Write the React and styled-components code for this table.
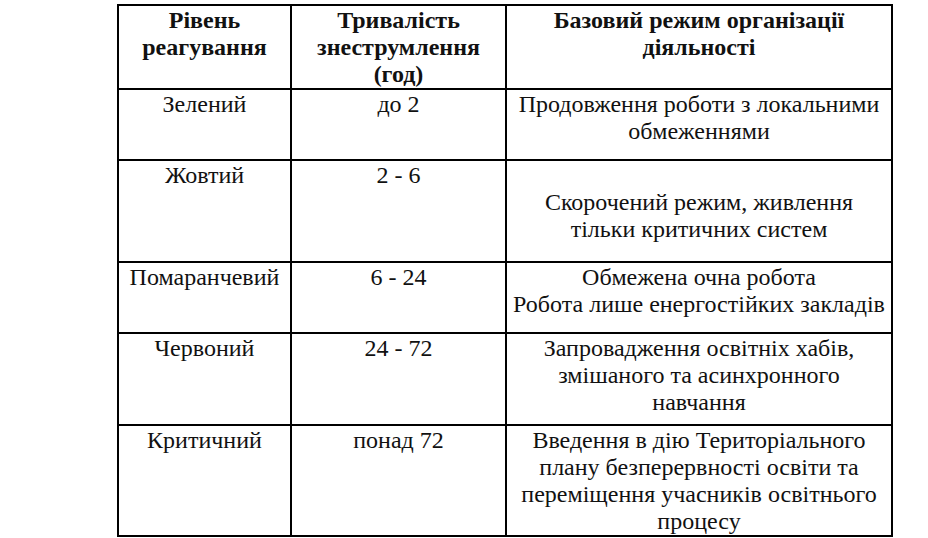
import styled, { createGlobalStyle } from "styled-components"

const GlobalStyle = createGlobalStyle`
  body {
    margin: 0;
  }
`

const serif = '"Liberation Serif", "Times New Roman", serif'

const Page = styled.div`
  padding: 4px 0 0 117px;
`

const Table = styled.table`
  border-collapse: collapse;
  font-family: ${(p) => p.f};
`

const Row = styled.tr`
  height: ${(props) => props.h}px;
`

const Cell = styled.td`
  font-family: ${(p) => p.f};
  font-size: 24px;
  line-height: 27px;
  font-weight: ${(p) => (p.head ? 700 : 400)};
  color: #111;
  width: ${(p) => p.w}px;
  border: 2px solid #000;
  text-align: center;
  vertical-align: top;
  padding: 1px 0 0;
  white-space: nowrap;
`

const widths = [171, 213, 384]

const rows = [
  { h: 71, level: "Зелений", time: "до 2", mode: ["Продовження роботи з локальними", "обмеженнями"] },
  { h: 102, level: "Жовтий", time: "2 - 6", mode: ["\u00a0", "Скорочений режим, живлення", "тільки критичних систем"] },
  { h: 71, level: "Помаранчевий", time: "6 - 24", mode: ["Обмежена очна робота", "Робота лише енергостійких закладів"] },
  { h: 92, level: "Червоний", time: "24 - 72", mode: ["Запровадження освітніх хабів,", "змішаного та асинхронного", "навчання"] },
  {
    h: 109,
    level: "Критичний",
    time: "понад 72",
    mode: ["Введення в дію Територіального", "плану безперервності освіти та", "переміщення учасників освітнього", "процесу"],
  },
]

const Lines = ({ items }) =>
  items.map((t, i) => (
    <span key={i}>
      {i > 0 && <br />}
      {t}
    </span>
  ))

const App = () => {
  return (
    <Page>
      <GlobalStyle />
      <Table f={serif}>
        <tbody>
          <Row h={82}>
            <Cell as="th" head f={serif} w={widths[0]}>
              <Lines items={["Рівень", "реагування"]} />
            </Cell>
            <Cell as="th" head f={serif} w={widths[1]}>
              <Lines items={["Тривалість", "знеструмлення", "(год)"]} />
            </Cell>
            <Cell as="th" head f={serif} w={widths[2]}>
              <Lines items={["Базовий режим організації", "діяльності"]} />
            </Cell>
          </Row>
          {rows.map((r) => (
            <Row key={r.level} h={r.h}>
              <Cell f={serif} w={widths[0]}>{r.level}</Cell>
              <Cell f={serif} w={widths[1]}>{r.time}</Cell>
              <Cell f={serif} w={widths[2]}>
                <Lines items={r.mode} />
              </Cell>
            </Row>
          ))}
        </tbody>
      </Table>
    </Page>
  )
}

export default App
